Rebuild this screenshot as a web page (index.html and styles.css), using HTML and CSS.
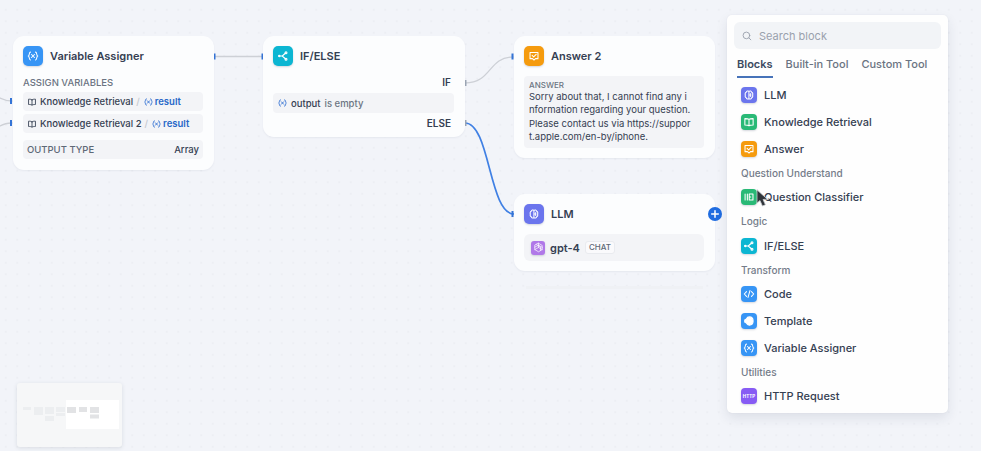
FILE: index.html
```html
<!DOCTYPE html>
<html lang="en">
<head>
<meta charset="utf-8">
<title>Workflow</title>
<link rel="stylesheet" href="styles.css">
</head>
<body>
<svg class="defs" aria-hidden="true">
  <defs>
    <symbol id="llm" viewBox="0 0 16 16"><path d="M7.9 2.6v10.8M7.9 3.2C6.6 2 4.6 2.8 4.4 4.4 2.8 5 2.4 7 3.2 8c-.8 1.4-.2 3.200 1.200 3.700.4 1.700 2.300 2.200 3.500 1.100M8 3.200c1.300-1.200 3.300-.4 3.500 1.200 1.700.6 2 2.600 1.200 3.600.8 1.400.2 3.200-1.200 3.700-.4 1.700-2.300 2.200-3.500 1.100M8 8h2.300M10.300 6v4"/></symbol>
    <symbol id="book" viewBox="0 0 16 16"><path d="M8 4.500C7 3.600 5 3.500 2.500 3.500v8.500c2.500 0 4.500.1 5.500 1 1-.9 3-1 5.500-1V3.500C11 3.500 9 3.600 8 4.500zM8 4.500V13"/></symbol>
    <symbol id="answer" viewBox="0 0 16 16"><path d="M2.700 3.200h10.600v8.300H10L8 13.400l-2-1.900H2.700zM5.500 7.200l2 1.900 3.400-3.400"/></symbol>
    <symbol id="classifier" viewBox="0 0 16 16"><path d="M2.800 4v8M5.800 4v8M8.300 4h5v8h-5zM8.300 8h2"/></symbol>
    <symbol id="branch" viewBox="0 0 16 16"><path d="M2.500 8H7l4.500-4M7 8l4.500 4"/><circle cx="12" cy="3.800" r="1.300"/><circle cx="12" cy="12.200" r="1.300"/><circle cx="3" cy="8" r=".9"/></symbol>
    <symbol id="code" viewBox="0 0 16 16"><path d="M4.700 4.800 1.700 8l3 3.200M11.300 4.800l3 3.200-3 3.200M9.300 3.500l-2.600 9"/></symbol>
    <symbol id="template" viewBox="0 0 16 16"><path class="solid" d="M8.500 2.500c3 0 5 2.400 5 5.500s-2 5.500-5 5.500c-1.800 0-3.300-1-4-2.700L2.300 9.500V6.600L4.500 5.300c.7-1.700 2.200-2.800 4-2.800z"/></symbol>
    <symbol id="variable" viewBox="0 0 16 16"><path d="M4.700 2.800C2.300 2.800 3.800 7.200 1.700 8c2.100.8.6 5.200 3 5.200M11.300 2.800c2.400 0 .9 4.400 3 5.200-2.100.8-.6 5.200-3 5.200M6.100 6l3.800 4M9.900 6l-3.800 4"/></symbol>
    <symbol id="gpt" viewBox="0 0 16 16"><path d="M8 1.800 13.400 5v6L8 14.200 2.600 11V5zM8 1.800v6.200l5.400 3M8 8l-5.400 3M5 3.700l6 3.500v5M2.600 7.500 8 4.700l5.400 3"/></symbol>
  </defs>
</svg>
<main class="canvas">
  <svg class="edges" viewBox="0 0 981 451">
    <path d="M0 98Q6 101 12 101M0 126Q5 123 12 123M214 56.500H263M465 83C492 83 488 57 513 57"/>
    <path class="active" d="M465 123C490 123 489 214 514 214"/>
    <g class="ports"><path d="M10 98h2v6h-2zM10 120h2v6h-2zM213.500 53.500h2v6h-2zM261.500 53.500h2v6h-2zM511.500 53.500h2v6h-2zM511.500 211h2v6h-2z"/><path class="muted" d="M464 80h2.500v6H464zM464 120h2.500v6H464z"/></g>
  </svg>

  <section class="node assigner">
    <header><span class="icon blue"><svg><use href="#variable"/></svg></span><h2 class="t-assigner">Variable Assigner</h2></header>
    <h3>ASSIGN VARIABLES</h3>
    <div class="row"><svg class="mini"><use href="#book"/></svg><span class="kr">Knowledge Retrieval</span><i>/</i><svg class="mini var"><use href="#variable"/></svg><b>result</b></div>
    <div class="row"><svg class="mini"><use href="#book"/></svg><span class="kr">Knowledge Retrieval 2</span><i>/</i><svg class="mini var"><use href="#variable"/></svg><b>result</b></div>
    <div class="row output"><span>OUTPUT TYPE</span><em>Array</em></div>
  </section>

  <section class="node ifelse">
    <header><span class="icon cyan"><svg><use href="#branch"/></svg></span><h2>IF/ELSE</h2></header>
    <div class="case">IF</div>
    <div class="row"><svg class="mini var"><use href="#variable"/></svg><span class="out">output</span><span class="op">is empty</span></div>
    <div class="case">ELSE</div>
  </section>

  <section class="node answer">
    <header><span class="icon orange"><svg><use href="#answer"/></svg></span><h2>Answer 2</h2></header>
    <div class="message"><h4>ANSWER</h4>
      <p class="l1">Sorry about that, I cannot find any i</p><p class="l2">nformation regarding your question.</p><p class="l3">Please contact us via https://suppor</p><p class="l4">t.apple.com/en-by/iphone.</p></div>
  </section>

  <section class="node model">
    <header><span class="icon indigo"><svg><use href="#llm"/></svg></span><h2>LLM</h2></header>
    <div class="row"><span class="icon gpt"><svg><use href="#gpt"/></svg></span><strong>gpt-4</strong><small>CHAT</small></div>
  </section>
  <div class="trace"></div>
  <div class="add"><svg viewBox="0 0 14 14"><path d="M7 3.700v6.600M3.700 7h6.600"/></svg></div>

  <div class="minimap"><svg viewBox="0 0 105 64">
    <rect class="view" x="49" y="17" width="53" height="29"/>
    <g class="far"><rect x="6" y="24" width="8" height="3"/><rect x="17" y="24" width="9" height="8"/><rect x="28" y="24" width="9" height="7"/><rect x="28" y="33" width="9" height="5"/><rect x="39" y="24" width="9" height="5"/><rect x="39" y="30" width="9" height="3"/></g>
    <g class="near"><rect x="50" y="24" width="9" height="6"/><rect x="62" y="24" width="8" height="5"/><rect x="73" y="24" width="9" height="6"/><rect x="73" y="31.500" width="9" height="4"/></g>
  </svg></div>

  <aside class="panel">
    <div class="search"><svg viewBox="0 0 12 12"><circle cx="5.300" cy="5.300" r="4"/><path d="m8.300 8.300 2.300 2.300"/></svg><span>Search block</span></div>
    <nav><a class="on">Blocks</a><a class="built">Built-in Tool</a><a class="custom">Custom Tool</a></nav>
    <ul>
      <li><span class="icon indigo"><svg><use href="#llm"/></svg></span><span>LLM</span></li>
      <li><span class="icon green"><svg><use href="#book"/></svg></span><span>Knowledge Retrieval</span></li>
      <li><span class="icon orange"><svg><use href="#answer"/></svg></span><span>Answer</span></li>
      <li class="group">Question Understand</li>
      <li><span class="icon green"><svg><use href="#classifier"/></svg></span><span>Question Classifier</span></li>
      <li class="group">Logic</li>
      <li><span class="icon cyan"><svg><use href="#branch"/></svg></span><span>IF/ELSE</span></li>
      <li class="group">Transform</li>
      <li><span class="icon blue"><svg><use href="#code"/></svg></span><span>Code</span></li>
      <li><span class="icon blue"><svg><use href="#template"/></svg></span><span>Template</span></li>
      <li><span class="icon blue"><svg><use href="#variable"/></svg></span><span>Variable Assigner</span></li>
      <li class="group">Utilities</li>
      <li><span class="icon violet">HTTP</span><span>HTTP Request</span></li>
    </ul>
  </aside>
  <svg class="cursor" viewBox="0 0 12 19"><path d="M1 1v13l3-2.500 2.400 5.500 3-1.300-2.400-5.200 4-.3z"/></svg>
</main>
</body>
</html>
```
FILE: styles.css
```css
* { box-sizing: border-box; }
body { margin: 0; font-family: Inter, "Liberation Sans", sans-serif; color: #354052; }
h2, h3, h4, p, ul { margin: 0; padding: 0; }
svg { display: block; fill: none; stroke: currentColor; stroke-linecap: round; stroke-linejoin: round; }
.defs { position: absolute; width: 0; height: 0; }
.canvas {
  position: relative; width: 981px; height: 451px; overflow: hidden;
  background: radial-gradient(circle, #eceef4 0.7px, transparent 1px) 0 4px / 11.500px 11.500px, #f2f4f9;
}
.edges { position: absolute; inset: 0; width: 981px; height: 451px; stroke: #cdd0d6; stroke-width: 1.300; }
.edges .active { stroke: #4080e4; stroke-width: 1.700; }
.ports { fill: #3474d6; stroke: none; }
.ports .muted { fill: #9ca6b5; }

.node { position: absolute; width: 201px; padding: 10px; border-radius: 11px; background: #fcfdfe; box-shadow: 0 1px 2px rgba(40, 50, 80, .06); }
.assigner { left: 13px; top: 36px; height: 134px; }
.ifelse { left: 263px; top: 36px; width: 202px; height: 101px; }
.answer { left: 514px; top: 36px; height: 122px; }
.model { left: 514px; top: 194px; height: 77px; }
.node header { display: flex; align-items: center; gap: 7px; height: 20px; }
h2 { font-size: 11px; font-weight: 600; line-height: 20px; white-space: nowrap; }
.icon { display: flex; flex: none; align-items: center; justify-content: center; width: 20px; height: 20px; border-radius: 5px; color: #fff; box-shadow: 0 1px 2px rgba(50, 60, 90, .2); }
.icon svg { width: 12px; height: 12px; stroke-width: 1.400; }
.solid { fill: #fff; }
.blue { background: #3795f5; }
.cyan { background: #0cb6d2; }
.orange { background: #f59b0e; }
.indigo { background: #6b75ed; }
.green { background: #29b976; }
.violet { background: #875bf4; font-size: 4.500px; font-weight: 700; }

h3 { height: 26px; padding-top: 7px; font-size: 9.500px; font-weight: 500; line-height: 20px; color: #6b7482; }
.row { display: flex; align-items: center; height: 20px; padding: 0 4px; margin-right: 1px; border-radius: 4px; background: #f3f4f7; font-size: 9.500px; font-weight: 500; white-space: nowrap; }
.assigner .row { height: 19px; margin-bottom: 3px; }
.mini { width: 10px; height: 10px; margin-right: 3px; flex: none; stroke-width: 1.400; }
.row .var { color: #2f6fd2; margin-right: 1px; width: 11px; }
.row i { margin: 0 3px; color: #c5c9d0; font-style: normal; }
.row b { color: #2868c8; font-weight: 600; }
.assigner .output { justify-content: space-between; margin-top: 7px; color: #5e6876; }
.output em { color: #354052; font-style: normal; }
.case { height: 27px; padding-right: 4px; text-align: right; font-size: 10px; font-weight: 600; line-height: 33px; }
.ifelse .row + .case { line-height: 21px; }
.ifelse .var { margin-right: 3px; }
.op { margin-left: 4px; color: #6b7482; }
.message { height: 72px; margin: 10px 1px 0 0; padding: 3px 5px; border-radius: 4px; background: #f3f4f7; }
h4 { height: 11px; font-size: 8px; font-weight: 500; line-height: 12px; color: #6b7482; }
.message p { height: 13.300px; font-size: 9.500px; line-height: 13.300px; white-space: nowrap; }
.model .row { height: 27px; margin-top: 10px; padding: 0 7px; border-radius: 6px; }
.model .gpt { width: 14px; height: 14px; border-radius: 3px; background: #b078e8; }
.gpt svg { width: 11px; height: 11px; stroke-width: 1; }
.model strong { margin-left: 5px; font-size: 11px; font-weight: 600; }
.model small { margin-left: 5px; padding: 0 3px; border: 1px solid #e9ebef; border-radius: 3px; background: #fafafc; font-size: 8px; line-height: 11px; color: #5e6876; }
.trace { position: absolute; left: 526px; top: 286px; width: 177px; height: 3px; background: #eff1f5; }
.add { position: absolute; left: 708px; top: 207px; width: 14px; height: 14px; border-radius: 50%; background: #1f6ce0; color: #fff; }
.add svg { stroke-width: 1.500; }

.minimap { position: absolute; left: 17px; top: 383px; width: 105px; height: 64px; border-radius: 3px; background: #f6f7f8; box-shadow: 0 1px 4px rgba(50, 60, 80, .13); }
.minimap svg { stroke: none; }
.view { fill: #fff; }
.far { fill: #eceef0; }
.near { fill: #e2e3e5; }

.panel { position: absolute; left: 727px; top: 15px; width: 221px; height: 398px; padding: 7px 7px 0; border-radius: 5px; background: #fefefe; box-shadow: 0 5px 12px rgba(40, 50, 80, .1), 0 0 2px rgba(40, 50, 80, .06); }
.search { display: flex; align-items: center; gap: 7px; height: 27px; padding-left: 8px; border-radius: 6px; background: #f2f4f7; color: #9aa1ad; font-size: 11px; }
.search svg { width: 10px; height: 10px; stroke-width: 1.100; }
nav { display: flex; gap: 13px; height: 29px; padding-left: 3px; font-size: 11px; font-weight: 500; line-height: 31px; color: #6a7382; white-space: nowrap; }
nav .on { border-bottom: 2px solid #4773b9; color: #3c4a61; font-weight: 600; }
ul { padding: 4px 0 0 7px; list-style: none; }
li { display: flex; align-items: center; gap: 7px; height: 26.700px; font-size: 11px; font-weight: 500; white-space: nowrap; }
li .icon { width: 16px; height: 16px; border-radius: 4px; }
li .icon svg { width: 12px; height: 12px; }
li.group { height: 21.900px; padding-bottom: 1px; font-size: 10px; color: #747c89; }
.cursor { position: absolute; left: 756px; top: 189px; width: 12px; height: 19px; fill: #30343a; stroke: #c5c9cc; stroke-width: .8; }
```
